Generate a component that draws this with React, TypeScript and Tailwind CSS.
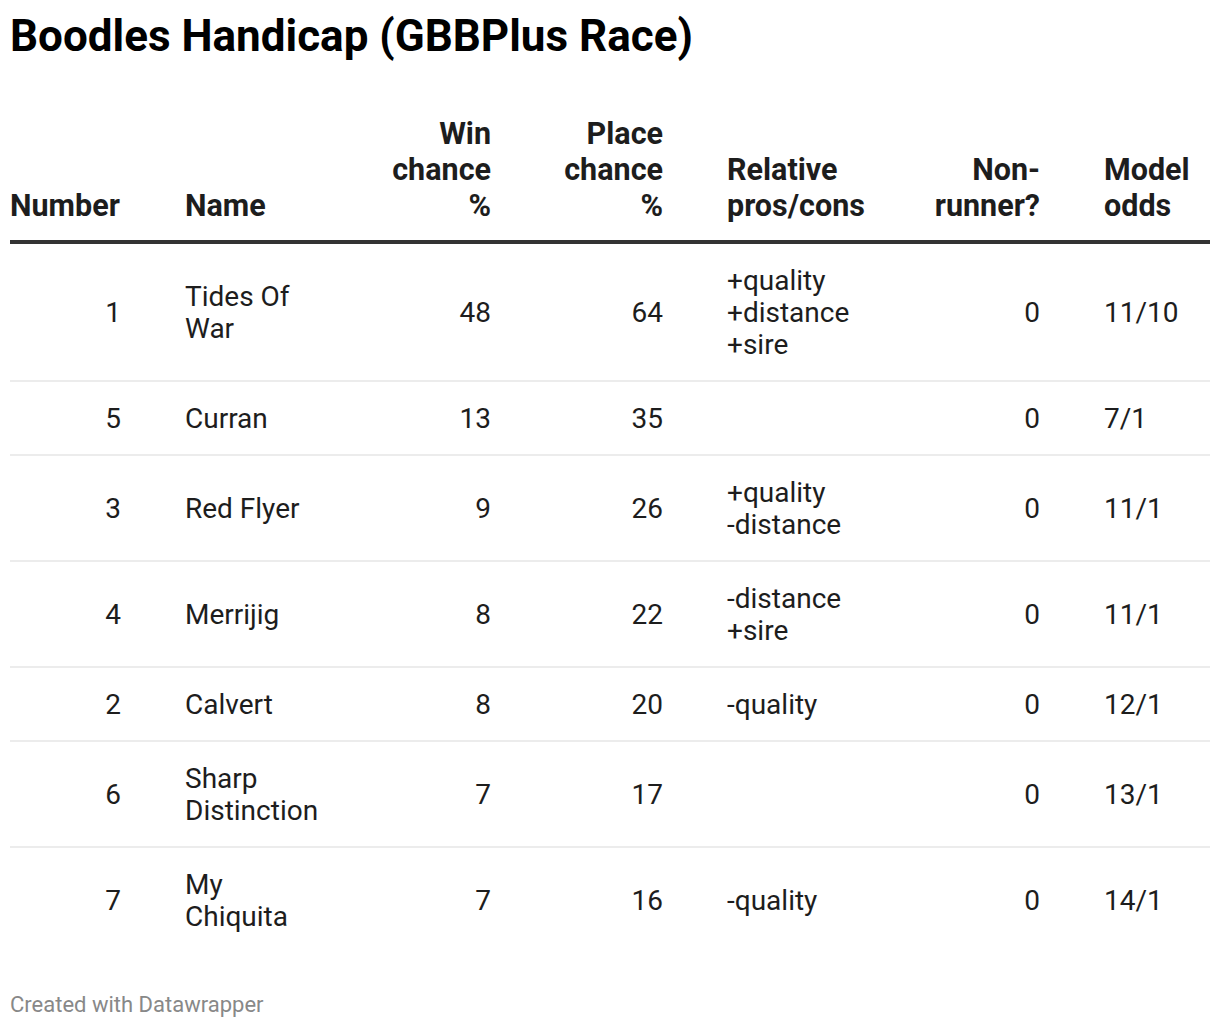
import React from "react";

type Row = {
  num: string;
  name: string[];
  win: string;
  place: string;
  rel: string[];
  nr: string;
  odds: string;
};

const rows: Row[] = [
  { num: "1", name: ["Tides Of", "War"], win: "48", place: "64", rel: ["+quality", "+distance", "+sire"], nr: "0", odds: "11/10" },
  { num: "5", name: ["Curran"], win: "13", place: "35", rel: [], nr: "0", odds: "7/1" },
  { num: "3", name: ["Red Flyer"], win: "9", place: "26", rel: ["+quality", "-distance"], nr: "0", odds: "11/1" },
  { num: "4", name: ["Merrijig"], win: "8", place: "22", rel: ["-distance", "+sire"], nr: "0", odds: "11/1" },
  { num: "2", name: ["Calvert"], win: "8", place: "20", rel: ["-quality"], nr: "0", odds: "12/1" },
  { num: "6", name: ["Sharp", "Distinction"], win: "7", place: "17", rel: [], nr: "0", odds: "13/1" },
  { num: "7", name: ["My", "Chiquita"], win: "7", place: "16", rel: ["-quality"], nr: "0", odds: "14/1" },
];

function Lines({ items }: { items: string[] }) {
  return (
    <>
      {items.map((t, i) => (
        <div key={i} className="whitespace-nowrap">
          {t}
        </div>
      ))}
    </>
  );
}

export default function App() {
  const th =
    "align-bottom font-bold text-[30.5px] leading-[36px] pb-[16px] border-b-4 border-[#333333] whitespace-nowrap";
  return (
    <div
      className="w-[1220px] h-[1028px] bg-white px-[10px] pt-[11px] text-[#1d1d1d]"
      style={{ fontFamily: "Roboto, 'Noto Sans', Arial, sans-serif" }}
    >
      <h1 className="text-[44px] leading-[50px] font-bold text-black">Boodles Handicap (GBBPlus Race)</h1>
      <table className="mt-[55px] w-[1200px] table-fixed border-separate border-spacing-0">
        <colgroup>
          <col className="w-[143px]" />
          <col className="w-[200px]" />
          <col className="w-[170px]" />
          <col className="w-[172px]" />
          <col className="w-[205px]" />
          <col className="w-[172px]" />
          <col className="w-[138px]" />
        </colgroup>
        <thead>
          <tr>
            <th className={`${th} text-left pl-0 pr-8`}>Number</th>
            <th className={`${th} text-left px-8`}>Name</th>
            <th className={`${th} text-right px-8`}>
              <div>Win</div>
              <div>chance</div>
              <div>%</div>
            </th>
            <th className={`${th} text-right px-8`}>
              <div>Place</div>
              <div>chance</div>
              <div>%</div>
            </th>
            <th className={`${th} text-left px-8`}>
              <div>Relative</div>
              <div>pros/cons</div>
            </th>
            <th className={`${th} text-right px-8`}>
              <div>Non-</div>
              <div>runner?</div>
            </th>
            <th className={`${th} text-left pl-8 pr-0`}>
              <div>Model</div>
              <div>odds</div>
            </th>
          </tr>
        </thead>
        <tbody>
          {rows.map((r, i) => {
            const last = i === rows.length - 1;
            const td = `align-middle text-[28px] leading-[32px] pt-[21px] pb-[19px] ${last ? "" : "border-b-2 border-[#ececec]"}`;
            return (
              <tr key={i}>
                <td className={`${td} text-right pl-0 pr-8`}>{r.num}</td>
                <td className={`${td} text-left px-8`}>
                  <Lines items={r.name} />
                </td>
                <td className={`${td} text-right px-8`}>{r.win}</td>
                <td className={`${td} text-right px-8`}>{r.place}</td>
                <td className={`${td} text-left px-8`}>
                  <Lines items={r.rel} />
                </td>
                <td className={`${td} text-right px-8`}>{r.nr}</td>
                <td className={`${td} text-left pl-8 pr-0`}>{r.odds}</td>
              </tr>
            );
          })}
        </tbody>
      </table>
      <div className="mt-[40px] text-[22px] leading-[26px] text-[#888888]">Created with Datawrapper</div>
    </div>
  );
}
